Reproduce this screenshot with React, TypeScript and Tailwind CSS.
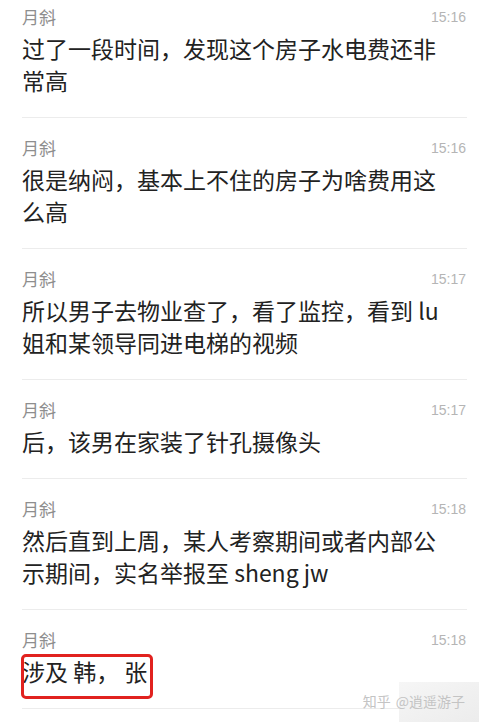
import React from "react";

type Msg = { time: string; lines: string; highlight?: boolean };

const msgs: Msg[] = [
  { time: "15:16", lines: "过了一段时间，发现这个房子水电费还非常高" },
  { time: "15:16", lines: "很是纳闷，基本上不住的房子为啥费用这么高" },
  { time: "15:17", lines: "所以男子去物业查了，看了监控，看到 lu 姐和某领导同进电梯的视频" },
  { time: "15:17", lines: "后，该男在家装了针孔摄像头" },
  { time: "15:18", lines: "然后直到上周，某人考察期间或者内部公示期间，实名举报至 sheng jw" },
  { time: "15:18", lines: "涉及 韩， 张", highlight: true },
];

const cjk = { fontFamily: '"Noto Sans CJK SC", "Noto Sans", sans-serif' };

export default function App() {
  return (
    <div className="relative w-[479px] h-[722px] overflow-hidden bg-white" style={cjk}>
      <div className="flex flex-col pl-[22px] pr-[12px]">
        {msgs.map((m, i) => (
          <div key={i} className={`flex flex-col border-b border-[#ececec] pb-[21px] ${i === 0 ? "pt-[6px]" : "pt-[19px]"}`}>
            <div className="flex items-start justify-between h-[22px]">
              <span className="text-[17px] leading-[22px] text-[#8e8e8e]">月斜</span>
              <span
                className="text-[14px] leading-[22px] text-[#b5b5b5] pr-[1px]"
                style={{ fontFamily: '"Liberation Sans", Arial, sans-serif' }}
              >
                {m.time}
              </span>
            </div>
            <div className="relative mt-[4px] w-[432px] text-[23px] leading-[32px] text-[#222222] break-all">
              {m.lines}
              {m.highlight && (
                <div className="absolute left-[-1px] top-[-1px] w-[132px] h-[45px] rounded-[5px] border-[3px] border-[#e1221f]" />
              )}
            </div>
          </div>
        ))}
      </div>
      <div className="absolute right-0 bottom-0 w-[80px] h-[40px] bg-gradient-to-br from-[#f6f6f6] to-[#ececec]" />
      <div className="absolute right-[14px] bottom-[12px] flex items-center gap-[5px] text-[14px] leading-[18px] text-[#c4c4c4] whitespace-nowrap">
        <span>知乎</span>
        <span>@逍遥游子</span>
      </div>
    </div>
  );
}
